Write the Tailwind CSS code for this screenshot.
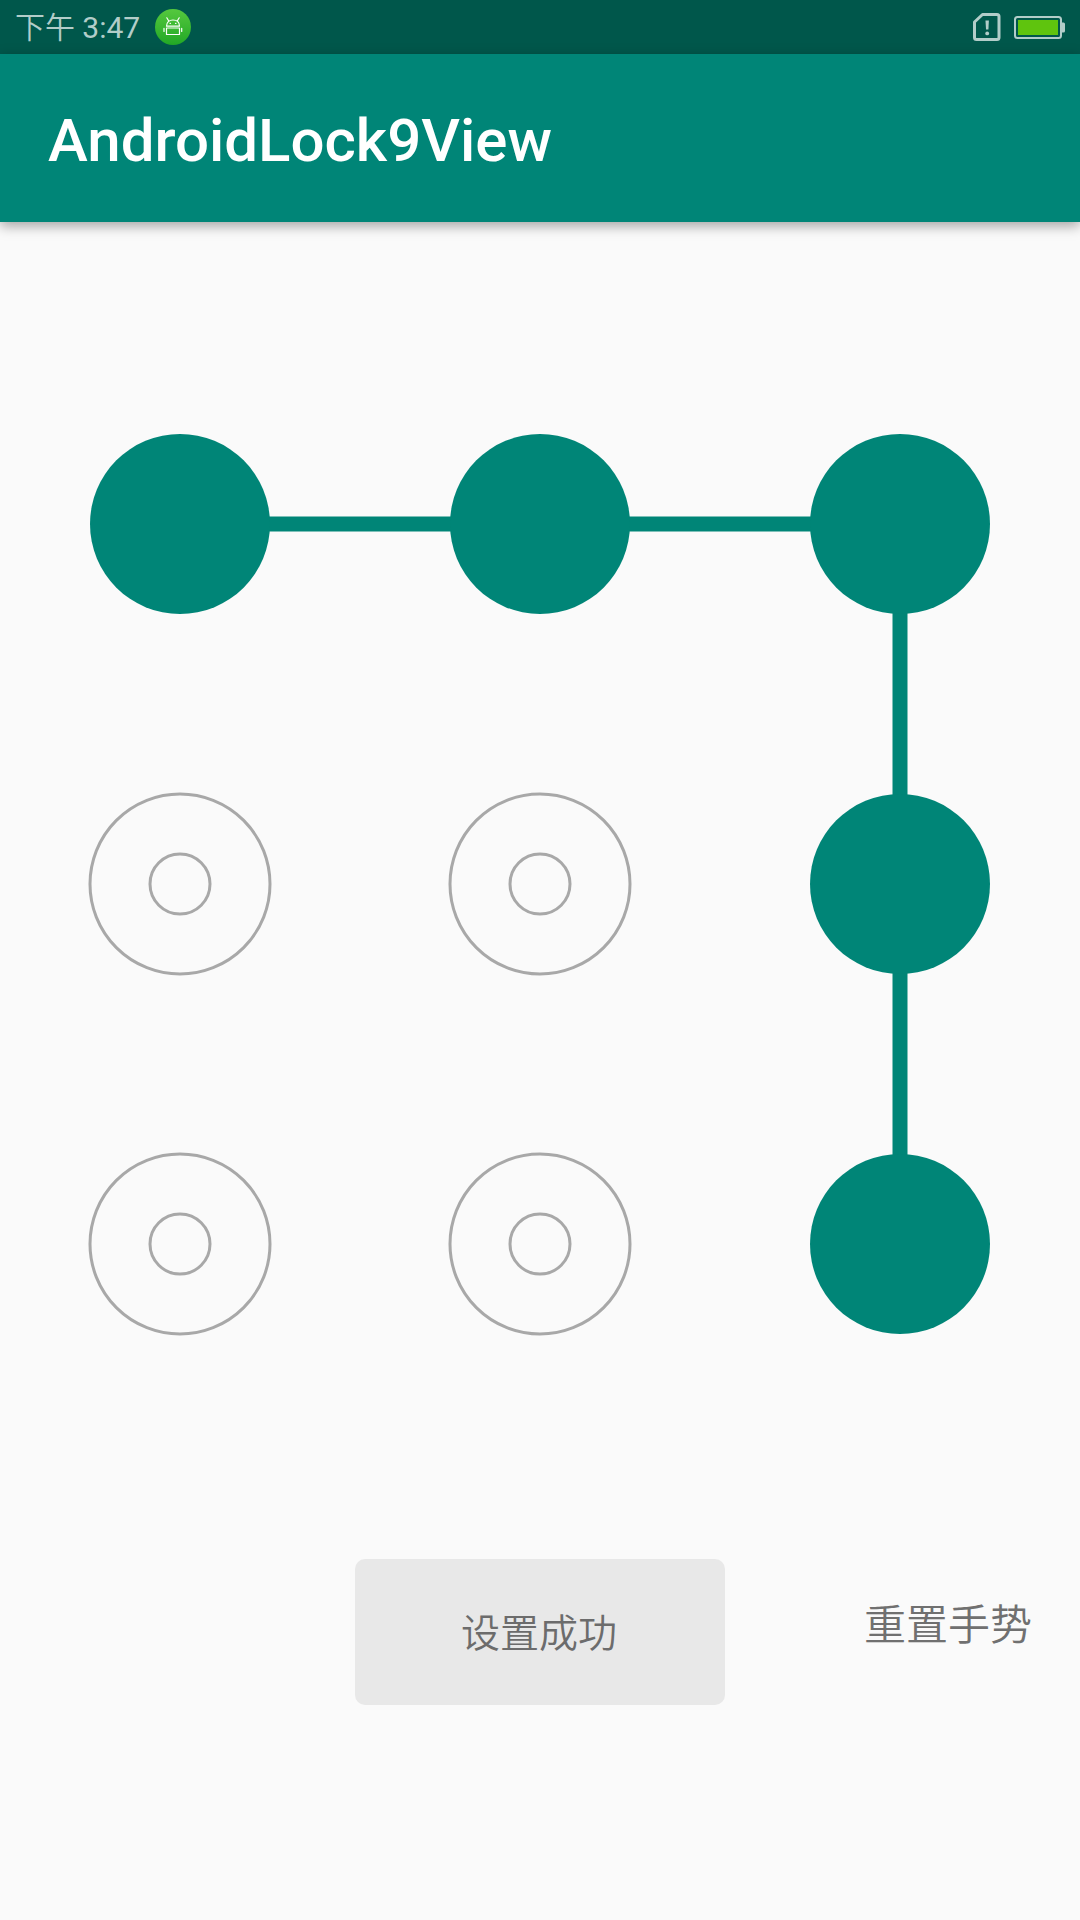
<!DOCTYPE html>
<html lang="zh-CN">
<head>
<meta charset="utf-8">
<meta name="viewport" content="width=device-width, initial-scale=1">
<title>AndroidLock9View</title>
<script src="https://cdn.jsdelivr.net/npm/@tailwindcss/browser@4"></script>
</head>
<body class="flex min-h-screen flex-col bg-[#fafafa] font-[Roboto,'Noto_Sans_CJK_SC',sans-serif]">
  <div class="flex h-[54px] items-center justify-between bg-[#00574b] pr-[15px] pl-[15px]">
    <div class="flex items-center gap-[15px]">
      <span class="pt-px text-[30px] leading-[54px] font-[350] text-[#b2cdc9]">下午 <span class="font-normal">3:47</span></span>
      <svg class="size-9" viewBox="0 0 36 36" fill="none" aria-hidden="true">
        <defs><linearGradient id="badge" x1="0" y1="0" x2="0" y2="1"><stop offset="0" stop-color="#55c83e"/><stop offset="1" stop-color="#22a826"/></linearGradient></defs>
        <circle cx="18" cy="18" r="18" fill="url(#badge)"/>
        <g stroke="#fff" stroke-width="1.2" stroke-linecap="round" stroke-linejoin="round">
          <path d="M11.5 17.2c0-4 2.7-6.2 6.5-6.2s6.5 2.2 6.5 6.2zM13.6 11.800l-1.800-3M22.400 11.800l1.800-3"/>
          <path d="M11.500 19v6.500h13V19M9 19.300v3.200M26.700 19.300v3.200M11.500 19h13"/>
          <path d="M15 14.300h.5M20.500 14.300h.5"/>
        </g>
      </svg>
    </div>
    <div class="flex items-center gap-3">
      <svg class="h-[30px] w-7" viewBox="0 0 28 30" fill="none" aria-hidden="true">
        <path d="M9.500 2.500H24a2 2 0 0 1 2 2v21a2 2 0 0 1-2 2H3.500a2 2 0 0 1-2-2V10z" stroke="#b2cdc9" stroke-width="3" stroke-linejoin="round"/>
        <path d="M12.500 8.500h3.400l-.5 9h-2.400z" fill="#b2cdc9"/><circle cx="14.200" cy="21.400" r="1.900" fill="#b2cdc9"/>
      </svg>
      <svg class="h-6 w-[52px]" viewBox="0 0 52 24" aria-hidden="true">
        <rect x="2" y="2" width="46" height="21" rx="2.500" fill="none" stroke="#b2cdc9" stroke-width="2"/>
        <path d="M49 7.500h1.500q1.500 0 1.500 1.500v7q0 1.500-1.500 1.500H49z" fill="#b2cdc9"/>
        <rect x="5" y="5" width="40" height="15" fill="#5fc40e"/>
      </svg>
    </div>
  </div>
  <header class="flex h-[168px] items-center bg-[#008577] px-12 pt-1.5 shadow-[0_4px_12px_rgba(0,0,0,0.35)]">
    <h1 class="text-[60px] leading-[72px] font-medium text-white">AndroidLock9View</h1>
  </header>
  <main class="flex flex-col pt-[122px]">
    <svg class="w-full" viewBox="0 0 1080 1080" role="img" aria-label="手势">
      <g fill="none" stroke="#a8a8a8" stroke-width="3">
        <circle cx="180" cy="540" r="90"/><circle cx="180" cy="540" r="30"/>
        <circle cx="540" cy="540" r="90"/><circle cx="540" cy="540" r="30"/>
        <circle cx="180" cy="900" r="90"/><circle cx="180" cy="900" r="30"/>
        <circle cx="540" cy="900" r="90"/><circle cx="540" cy="900" r="30"/>
      </g>
      <path d="M180 180H900V900" fill="none" stroke="#008577" stroke-width="15"/>
      <g fill="#008577">
        <circle cx="180" cy="180" r="90"/><circle cx="540" cy="180" r="90"/><circle cx="900" cy="180" r="90"/>
        <circle cx="900" cy="540" r="90"/><circle cx="900" cy="900" r="90"/>
      </g>
    </svg>
    <div class="grid grid-cols-[1fr_370px_1fr] items-start pt-[135px]">
      <div role="status" class="col-start-2 flex h-[146px] items-center justify-center rounded-[10px] bg-[#e8e8e8] pt-1 pr-0.5 text-[39px] leading-[58px] font-[350] text-[#6c6c6c]">设置成功</div>
      <button type="button" class="mr-12 h-[134px] justify-self-end text-[42px] leading-[60px] font-[350] text-[#707070]">重置手势</button>
    </div>
  </main>
</body>
</html>
